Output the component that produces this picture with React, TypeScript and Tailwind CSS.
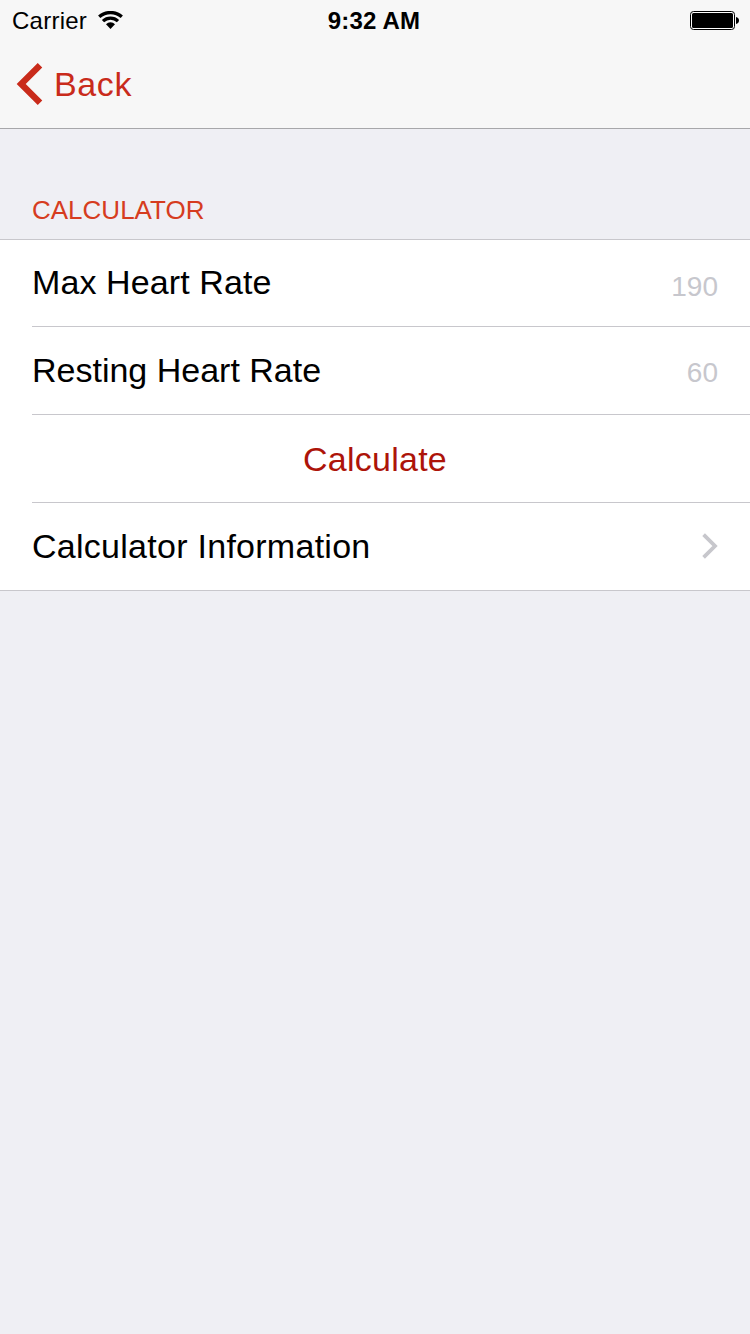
import React from "react";

function StatusBar() {
  return (
    <div className="grid h-[40px] grid-cols-3 text-[24px] leading-[27px] text-black">
      <div className="flex items-start pt-[7px] pl-[12px]">
        <span className="tracking-[0.25px]">Carrier</span>
        <svg className="mt-[4px] ml-[11px] shrink-0" width="25" height="18" viewBox="0 0 25 18" fill="none" stroke="#000">
          <path d="M1.2 5.8A17 17 0 0 1 23.8 5.8" strokeWidth="3.3" />
          <path d="M5 10.1A11 11 0 0 1 20 10.1" strokeWidth="3.3" />
          <path d="M8 13.3A6.2 6.2 0 0 1 17 13.3L12.5 18Z" fill="#000" stroke="none" />
        </svg>
      </div>
      <div className="pt-[7px] pr-[2px] text-center font-bold tracking-[0.2px]">9:32 AM</div>
      <div className="flex justify-end pt-[10px] pr-[10px]">
        <svg width="50" height="20" viewBox="0 0 50 20">
          <rect x="0.5" y="1.5" width="44" height="18" rx="3" fill="#fff" stroke="#000" />
          <rect x="2" y="3" width="41" height="15" rx="1.5" fill="#000" />
          <path d="M46 7C50 7.5 50 13.5 46 14Z" fill="#000" />
        </svg>
      </div>
    </div>
  );
}

export default function App() {
  return (
    <div className="flex h-[1334px] w-[750px] flex-col bg-[#efeff4] font-['Liberation_Sans',Arial,sans-serif]">
      <header className="h-[129px] border-b border-[#a7a7aa] bg-[#f7f7f7]">
        <StatusBar />
        <button className="flex items-start pl-[16px] text-[34px] leading-[38px] text-[#c92b1b]">
          <svg className="mt-[22px] shrink-0" width="27" height="44" viewBox="0 0 27 44" fill="none" stroke="currentColor" strokeWidth="6.4">
            <path d="M24 3.2L5.2 22L24 40.8" />
          </svg>
          <span className="mt-[25px] ml-[11px] tracking-[0.6px]">Back</span>
        </button>
      </header>

      <h2 className="h-[110px] pt-[66px] pl-[32px] text-[26px] leading-[30px] text-[#d63c20]">CALCULATOR</h2>

      <main className="border-y border-[#c8c7cc] bg-white pl-[32px] text-[34px] leading-[38px] text-black">
        <div className="flex h-[87px] items-start justify-between border-b border-[#c8c7cc] pr-[32px]">
          <span className="mt-[23px] tracking-[0.1px]">Max Heart Rate</span>
          <span className="mt-[31px] text-[28px] leading-[31px] text-[#c7c7cd]">190</span>
        </div>
        <div className="flex h-[88px] items-start justify-between border-b border-[#c8c7cc] pr-[32px]">
          <span className="mt-[24px]">Resting Heart Rate</span>
          <span className="mt-[30px] text-[28px] leading-[31px] text-[#c7c7cd]">60</span>
        </div>
        <button className="block h-[88px] w-full border-b border-[#c8c7cc] pr-[32px] text-center tracking-[0.25px] text-[#ad1409]">
          Calculate
        </button>
        <div className="flex h-[87px] items-start justify-between pr-[32px]">
          <span className="mt-[24px] tracking-[0.27px]">Calculator Information</span>
          <svg className="mt-[29px] shrink-0" width="17" height="28" viewBox="0 0 17 28" fill="none" stroke="#c7c7cc" strokeWidth="3.8">
            <path d="M2.6 2.6L14 14L2.6 25.4" />
          </svg>
        </div>
      </main>
    </div>
  );
}
